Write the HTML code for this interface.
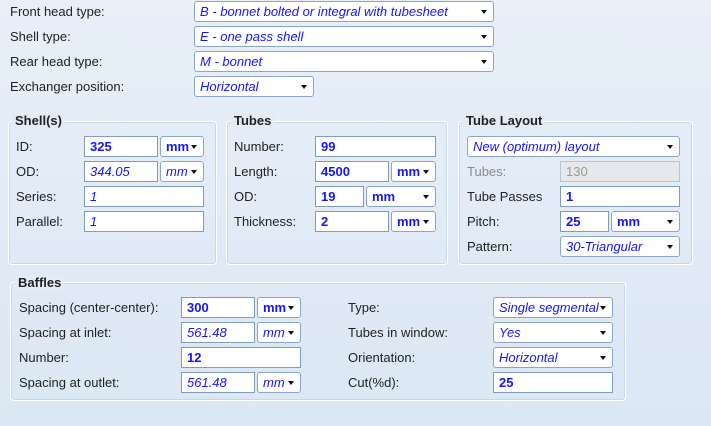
<!DOCTYPE html>
<html><head><meta charset="utf-8"><style>
*{box-sizing:border-box;margin:0;padding:0}
body{width:711px;height:426px;overflow:hidden;background:linear-gradient(#e8eff9,#dbe7f4);font-family:"Liberation Sans",sans-serif;font-size:13px;color:#222;position:relative}
.l{position:absolute;line-height:22px;white-space:nowrap}
.f,.c{position:absolute;height:21px;background:#fff;border:1px solid #7f9db9;line-height:20px;padding-left:5px;color:#1515ff;white-space:nowrap;overflow:hidden}
.c{border-radius:3px;border-color:#8aa6c4}
.c:after{content:"";position:absolute;right:6px;top:8px;border-left:3.5px solid transparent;border-right:3.5px solid transparent;border-top:4px solid #111}
.b{font-weight:bold}
.i{font-style:italic}
.g{position:absolute;border:1px solid #fff;border-radius:4px;box-shadow:inset 0 0 0 1px #c8d6e6}
.t{position:absolute;font-weight:bold;line-height:16px;background:#e2ebf6;padding:0 3px}
.dis{background:#e6e8ec;color:#9a9a9a;border-color:#b8c4d2}
</style></head><body>
<div class="l" style="left:10px;top:1px">Front head type:</div>
<div class="c i" style="left:194px;top:1px;width:300px">B - bonnet bolted or integral with tubesheet</div>
<div class="l" style="left:10px;top:26px">Shell type:</div>
<div class="c i" style="left:194px;top:26px;width:300px">E - one pass shell</div>
<div class="l" style="left:10px;top:51px">Rear head type:</div>
<div class="c i" style="left:194px;top:51px;width:300px">M - bonnet</div>
<div class="l" style="left:10px;top:76px">Exchanger position:</div>
<div class="c i" style="left:194px;top:76px;width:120px">Horizontal</div>

<div class="g" style="left:8px;top:121px;width:209px;height:144px"></div>
<div class="t" style="left:12px;top:113px">Shell(s)</div>
<div class="l" style="left:16px;top:136px">ID:</div>
<div class="f b" style="left:84px;top:136px;width:74px">325</div>
<div class="c b" style="left:160px;top:136px;width:44px">mm</div>
<div class="l" style="left:16px;top:161px">OD:</div>
<div class="f i" style="left:84px;top:161px;width:74px">344.05</div>
<div class="c i" style="left:160px;top:161px;width:44px">mm</div>
<div class="l" style="left:16px;top:186px">Series:</div>
<div class="f i" style="left:84px;top:186px;width:120px">1</div>
<div class="l" style="left:16px;top:211px">Parallel:</div>
<div class="f i" style="left:84px;top:211px;width:120px">1</div>

<div class="g" style="left:226px;top:121px;width:222px;height:144px"></div>
<div class="t" style="left:231px;top:113px">Tubes</div>
<div class="l" style="left:234px;top:136px">Number:</div>
<div class="f b" style="left:315px;top:136px;width:121px">99</div>
<div class="l" style="left:234px;top:161px">Length:</div>
<div class="f b" style="left:315px;top:161px;width:74px">4500</div>
<div class="c b" style="left:391px;top:161px;width:45px">mm</div>
<div class="l" style="left:234px;top:186px">OD:</div>
<div class="f b" style="left:315px;top:186px;width:49px">19</div>
<div class="c b" style="left:366px;top:186px;width:70px">mm</div>
<div class="l" style="left:234px;top:211px">Thickness:</div>
<div class="f b" style="left:315px;top:211px;width:74px">2</div>
<div class="c b" style="left:391px;top:211px;width:45px">mm</div>

<div class="g" style="left:458px;top:121px;width:235px;height:144px"></div>
<div class="t" style="left:463px;top:113px">Tube Layout</div>
<div class="c i" style="left:467px;top:136px;width:213px">New (optimum) layout</div>
<div class="l" style="left:467px;top:161px;color:#8a8a8a">Tubes:</div>
<div class="f dis" style="left:560px;top:161px;width:120px">130</div>
<div class="l" style="left:467px;top:186px">Tube Passes</div>
<div class="f b" style="left:560px;top:186px;width:120px">1</div>
<div class="l" style="left:467px;top:211px">Pitch:</div>
<div class="f b" style="left:560px;top:211px;width:49px">25</div>
<div class="c b" style="left:611px;top:211px;width:69px">mm</div>
<div class="l" style="left:467px;top:236px">Pattern:</div>
<div class="c i" style="left:560px;top:236px;width:120px">30-Triangular</div>

<div class="g" style="left:10px;top:282px;width:616px;height:119px"></div>
<div class="t" style="left:15px;top:275px">Baffles</div>
<div class="l" style="left:19px;top:297px">Spacing (center-center):</div>
<div class="f b" style="left:181px;top:297px;width:74px">300</div>
<div class="c b" style="left:257px;top:297px;width:44px">mm</div>
<div class="l" style="left:19px;top:322px">Spacing at inlet:</div>
<div class="f i" style="left:181px;top:322px;width:74px">561.48</div>
<div class="c i" style="left:257px;top:322px;width:44px">mm</div>
<div class="l" style="left:19px;top:347px">Number:</div>
<div class="f b" style="left:181px;top:347px;width:120px">12</div>
<div class="l" style="left:19px;top:372px">Spacing at outlet:</div>
<div class="f i" style="left:181px;top:372px;width:74px">561.48</div>
<div class="c i" style="left:257px;top:372px;width:44px">mm</div>
<div class="l" style="left:348px;top:297px">Type:</div>
<div class="c i" style="left:493px;top:297px;width:120px;padding-right:16px">Single segmental</div>
<div class="l" style="left:348px;top:322px">Tubes in window:</div>
<div class="c i" style="left:493px;top:322px;width:120px">Yes</div>
<div class="l" style="left:348px;top:347px">Orientation:</div>
<div class="c i" style="left:493px;top:347px;width:120px">Horizontal</div>
<div class="l" style="left:348px;top:372px">Cut(%d):</div>
<div class="f b" style="left:493px;top:372px;width:120px">25</div>
</body></html>
